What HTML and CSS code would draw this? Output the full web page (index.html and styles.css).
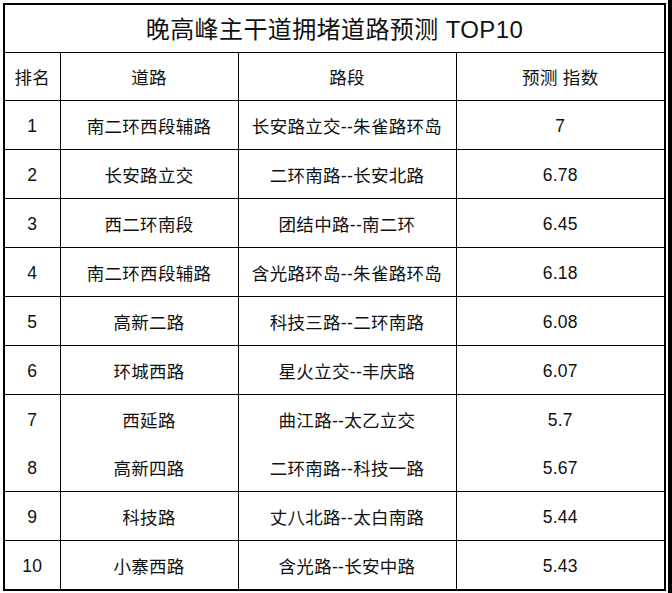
FILE: index.html
```html
<!DOCTYPE html>
<html lang="zh-CN">
<head>
<meta charset="utf-8">
<title>晚高峰主干道拥堵道路预测 TOP10</title>
<link rel="stylesheet" href="styles.css">
</head>
<body>
<div class="page">
  <div class="canvas">
    <table class="rank">
      <colgroup>
        <col class="c-rank">
        <col class="c-road">
        <col class="c-seg">
        <col class="c-idx">
      </colgroup>
      <thead>
        <tr class="title-row"><th colspan="4">晚高峰主干道拥堵道路预测 TOP10</th></tr>
        <tr class="head-row"><th>排名</th><th>道路</th><th>路段</th><th>预测 指数</th></tr>
      </thead>
      <tbody>
        <tr><td class="num">1</td><td>南二环西段辅路</td><td>长安路立交--朱雀路环岛</td><td class="num">7</td></tr>
        <tr><td class="num">2</td><td>长安路立交</td><td>二环南路--长安北路</td><td class="num">6.78</td></tr>
        <tr><td class="num">3</td><td>西二环南段</td><td>团结中路--南二环</td><td class="num">6.45</td></tr>
        <tr><td class="num">4</td><td>南二环西段辅路</td><td>含光路环岛--朱雀路环岛</td><td class="num">6.18</td></tr>
        <tr><td class="num">5</td><td>高新二路</td><td>科技三路--二环南路</td><td class="num">6.08</td></tr>
        <tr><td class="num">6</td><td>环城西路</td><td>星火立交--丰庆路</td><td class="num">6.07</td></tr>
        <tr class="no-bottom"><td class="num">7</td><td>西延路</td><td>曲江路--太乙立交</td><td class="num">5.7</td></tr>
        <tr><td class="num">8</td><td>高新四路</td><td>二环南路--科技一路</td><td class="num">5.67</td></tr>
        <tr><td class="num">9</td><td>科技路</td><td>丈八北路--太白南路</td><td class="num">5.44</td></tr>
        <tr><td class="num">10</td><td>小寨西路</td><td>含光路--长安中路</td><td class="num">5.43</td></tr>
      </tbody>
    </table>
  </div>
  <div class="edge"></div>
</div>
</body>
</html>
```

FILE: styles.css
```css
html, body {
  margin: 0;
  padding: 0;
  background: #ffffff;
}

.page {
  display: flex;
  width: 672px;
  height: 593px;
}

.canvas {
  flex: 1;
  padding: 3px 0 0 3px;
  background: #ffffff;
}

.edge {
  width: 4px;
  background: #000000;
}

.rank {
  border-collapse: collapse;
  table-layout: fixed;
  width: 661px;
  border: 2px solid #000;
  font-family: "Liberation Sans", "Noto Sans CJK SC", Arial, sans-serif;
  color: #111;
}

.c-rank { width: 56px; }
.c-road { width: 178px; }
.c-seg { width: 218px; }
.c-idx { width: 209px; }

.rank th,
.rank td {
  border: 1px solid #000;
  padding: 0;
  text-align: center;
  vertical-align: middle;
  height: 48px;
  font-size: 17.5px;
  font-weight: normal;
  letter-spacing: 0.3px;
  white-space: nowrap;
}

.title-row th {
  font-size: 24px;
  height: 45px;
  letter-spacing: 0.4px;
  padding-bottom: 2px;
}

.head-row th {
  height: 47px;
}

.rank tbody td {
  height: 48px;
}

.rank tbody td.num {
  height: 45px;
  padding-top: 3px;
}

.no-bottom td {
  border-bottom: none;
}

.rank tbody tr.no-bottom + tr td {
  border-top: none;
}
```
